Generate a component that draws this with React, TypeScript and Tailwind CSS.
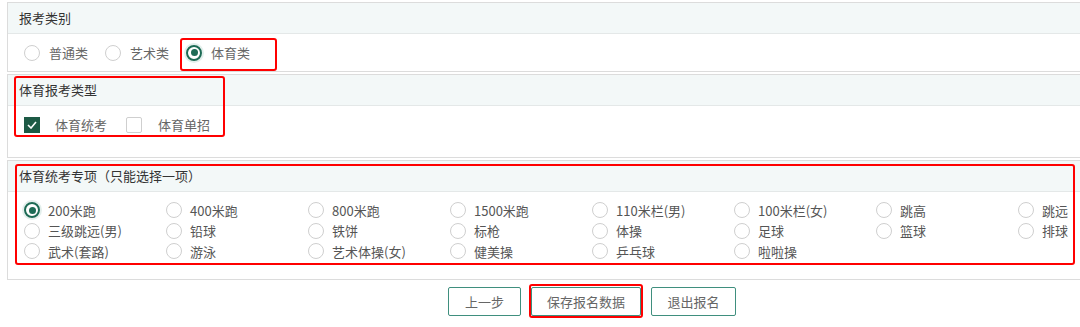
import React, { useState } from 'react';

// Options for the sport subject list
const sportItems = [
  '200米跑', '400米跑', '800米跑', '1500米跑', '110米栏(男)', '100米栏(女)', '跳高', '跳远',
  '三级跳远(男)', '铅球', '铁饼', '标枪', '体操', '足球', '篮球', '排球',
  '武术(套路)', '游泳', '艺术体操(女)', '健美操', '乒乓球', '啦啦操',
];

const Radio: React.FC<{ checked: boolean }> = ({ checked }) => (
  <span
    className={
      checked
        ? 'w-[16px] h-[16px] rounded-full border-2 border-[#1d6b55] flex items-center justify-center shrink-0 shadow-[0_0_0_2px_#e3efec]'
        : 'w-[16px] h-[16px] rounded-full border border-[#cfcfcf] shrink-0'
    }
  >
    {checked && <span className="w-[7px] h-[7px] rounded-full bg-[#1d6b55]" />}
  </span>
);

const Checkbox: React.FC<{ checked: boolean }> = ({ checked }) =>
  checked ? (
    <span className="w-[16px] h-[16px] bg-[#1d5a45] flex items-center justify-center shrink-0">
      <svg width="10" height="8" viewBox="0 0 10 8">
        <path d="M1 4 L4 7 L9 1" stroke="#fff" strokeWidth="1.6" fill="none" />
      </svg>
    </span>
  ) : (
    <span className="w-[16px] h-[16px] border border-[#cfcfcf] rounded-[2px] shrink-0" />
  );

const PanelHeader: React.FC<{ title: string }> = ({ title }) => (
  <div className="h-[31px] bg-[#f3f8f8] border-b border-[#e4e8e8] flex items-center pl-[11px] text-[13px] text-[#333]">
    {title}
  </div>
);

const App: React.FC = () => {
  const [category, setCategory] = useState('体育类');
  const [sport, setSport] = useState('200米跑');

  return (
    <div
      className="relative w-[1080px] h-[327px] overflow-hidden bg-white text-[#666]"
      style={{ fontFamily: '"Noto Sans CJK SC", "Noto Sans", sans-serif' }}
    >
      <div className="w-[1120px] pl-[7px] pt-[2px] flex flex-col gap-[2px]">
        {/* 报考类别 */}
        <div className="border border-[#dcdcdc] h-[70px]">
          <PanelHeader title="报考类别" />
          <div className="flex items-center h-[37px] pl-[16px] text-[13px]">
            {['普通类', '艺术类', '体育类'].map((c) => (
              <label
                key={c}
                onClick={() => setCategory(c)}
                className="flex items-center gap-[9px] mr-[17px] cursor-pointer"
              >
                <Radio checked={category === c} />
                <span>{c}</span>
              </label>
            ))}
          </div>
        </div>

        {/* 体育报考类型 */}
        <div className="border border-[#dcdcdc] h-[84px]">
          <PanelHeader title="体育报考类型" />
          <div className="flex items-center h-[38px] pl-[16px] text-[13px]">
            <Checkbox checked />
            <span className="ml-[15px] mr-[19px]">体育统考</span>
            <Checkbox checked={false} />
            <span className="ml-[16px]">体育单招</span>
          </div>
        </div>

        {/* 体育统考专项 */}
        <div className="border border-[#dcdcdc] h-[120px]">
          <PanelHeader title="体育统考专项（只能选择一项）" />
          <div className="grid grid-cols-[repeat(8,142px)] pl-[16px] pt-[8px] text-[13px]">
            {sportItems.map((s) => (
              <label
                key={s}
                onClick={() => setSport(s)}
                className="flex items-center gap-[8px] h-[20.5px] cursor-pointer"
              >
                <Radio checked={sport === s} />
                <span className="text-[#555]">{s}</span>
              </label>
            ))}
          </div>
        </div>
      </div>

      {/* 按钮 */}
      <div className="flex items-center gap-[10px] pl-[448px] pt-[7px] text-[13px]">
        <button className="w-[73px] h-[29px] border border-[#3f8f7e] rounded-[2px] text-[#666]">上一步</button>
        <button className="w-[110px] h-[29px] border border-[#3f8f7e] rounded-[2px] text-[#666]">保存报名数据</button>
        <button className="w-[85px] h-[29px] border border-[#3f8f7e] rounded-[2px] text-[#666]">退出报名</button>
      </div>

      {/* 标注红框 */}
      <div className="absolute left-[180px] top-[38px] w-[97px] h-[33px] border-2 border-[#f00] rounded-[3px] pointer-events-none" />
      <div className="absolute left-[14px] top-[76px] w-[211px] h-[61px] border-2 border-[#f00] rounded-[3px] pointer-events-none" />
      <div className="absolute left-[15px] top-[164px] w-[1060px] h-[101px] border-2 border-[#f00] rounded-[3px] pointer-events-none" />
      <div className="absolute left-[529px] top-[284px] w-[114px] h-[34px] border-2 border-[#f00] rounded-[3px] pointer-events-none" />
    </div>
  );
};

export default App;
